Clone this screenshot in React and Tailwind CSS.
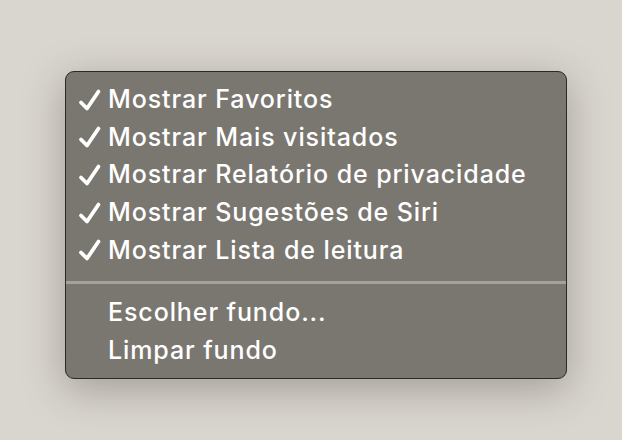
import { Fragment } from "react";

const marcados = [
  "Mostrar Favoritos",
  "Mostrar Mais visitados",
  "Mostrar Relatório de privacidade",
  "Mostrar Sugestões de Siri",
  "Mostrar Lista de leitura",
];

const acoes = ["Escolher fundo...", "Limpar fundo"];

function Check() {
  return (
    <svg width="24" height="24" viewBox="0 0 24 24" className="shrink-0">
      <path d="M3 14.5 L9 20.5 L20.5 3.5" fill="none" stroke="#ffffff"
        strokeWidth="3.8" strokeLinecap="round" strokeLinejoin="round" />
    </svg>
  );
}

function Item({ texto, marcado }) {
  return (
    <div className="flex h-[37.6px] items-center pl-[12px]">
      <div className="w-[30px]">{marcado && <Check />}</div>
      <span className="text-[25px] font-medium leading-none tracking-[0.9px] text-white">{texto}</span>
    </div>
  );
}

export default function App() {
  return (
    <div className="min-h-[440px] w-full bg-[#d9d5cf] pl-[65px] pt-[71px]"
      style={{ fontFamily: "Inter, 'Open Sans', sans-serif" }}>
      <div className="w-[502px] rounded-[9px] border border-[#2a2927] bg-[#7a7771] pb-[9px] pt-[9px] shadow-[0_10px_40px_rgba(60,55,45,0.35)]">
        {marcados.map((t) => (
          <Fragment key={t}>
            <Item texto={t} marcado />
          </Fragment>
        ))}
        <div className="mb-[10px] mt-[12px] h-[3px] bg-[#a5a29c]" />
        {acoes.map((t) => (
          <Item key={t} texto={t} />
        ))}
      </div>
    </div>
  );
}
